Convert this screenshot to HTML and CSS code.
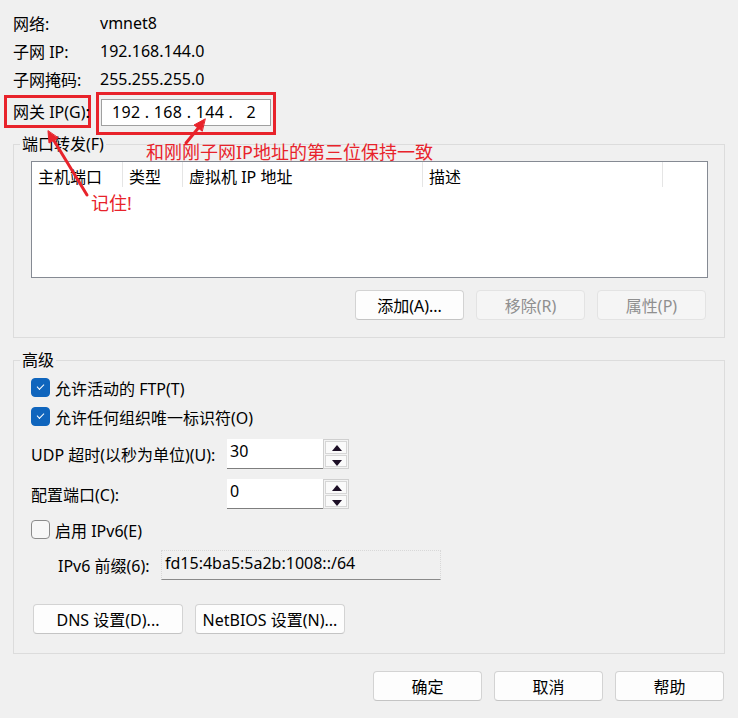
FILE: index.html
```html
<!DOCTYPE html>
<html>
<head>
    <title>NAT 设置</title>
    <link rel="stylesheet" href="styles.css">
</head>
<body>
    <div class="dialog">
        <div class="info">
            <div class="info-row"><span class="info-label">网络:</span><span>vmnet8</span></div>
            <div class="info-row"><span class="info-label">子网 IP:</span><span>192.168.144.0</span></div>
            <div class="info-row"><span class="info-label">子网掩码:</span><span>255.255.255.0</span></div>
            <div class="info-row gateway">
                <span class="info-label mark-box">网关 IP(G):</span>
                <div class="mark-box ip-wrap">
                    <div class="ip-input">192 . 168 . 144 .&nbsp;&nbsp; 2</div>
                </div>
            </div>
        </div>

        <fieldset class="group port-group">
            <legend>端口转发(F)</legend>
            <div class="list">
                <div class="list-head">
                    <span class="col c1">主机端口</span>
                    <span class="col c2">类型</span>
                    <span class="col c3">虚拟机 IP 地址</span>
                    <span class="col c4">描述</span>
                </div>
            </div>
            <div class="btn-row">
                <button class="btn">添加(A)...</button>
                <button class="btn" disabled>移除(R)</button>
                <button class="btn" disabled>属性(P)</button>
            </div>
        </fieldset>

        <fieldset class="group adv-group">
            <legend>高级</legend>
            <label class="check-row first"><span class="cb checked"></span>允许活动的 FTP(T)</label>
            <label class="check-row"><span class="cb checked"></span>允许任何组织唯一标识符(O)</label>
            <div class="field-row udp">
                <span class="field-label">UDP 超时(以秒为单位)(U):</span>
                <div class="spin">
                    <div class="spin-input">30</div>
                    <div class="spin-btns"><span class="up"></span><span class="down"></span></div>
                </div>
            </div>
            <div class="field-row port">
                <span class="field-label">配置端口(C):</span>
                <div class="spin">
                    <div class="spin-input">0</div>
                    <div class="spin-btns"><span class="up"></span><span class="down"></span></div>
                </div>
            </div>
            <label class="check-row ipv6"><span class="cb"></span>启用 IPv6(E)</label>
            <div class="prefix-row">
                <span class="prefix-label">IPv6 前缀(6):</span>
                <div class="prefix-input">fd15:4ba5:5a2b:1008::/64</div>
            </div>
            <div class="btn-row left">
                <button class="btn wide">DNS 设置(D)...</button>
                <button class="btn wide">NetBIOS 设置(N)...</button>
            </div>
        </fieldset>

        <div class="btn-row footer">
            <button class="btn">确定</button>
            <button class="btn">取消</button>
            <button class="btn">帮助</button>
        </div>
    </div>

    <!-- annotations drawn over the screenshot -->
    <div class="note note-ip">和刚刚子网IP地址的第三位保持一致</div>
    <div class="note note-remember">记住!</div>
    <svg class="arrows" width="738" height="718" viewBox="0 0 738 718">
        <g stroke="#e8232b" stroke-width="3" fill="#e8232b" stroke-linecap="round">
            <line x1="186" y1="143" x2="200" y2="126"/>
            <polygon points="205,119 194,125 202,131" stroke-width="1"/>
            <line x1="87" y1="195" x2="53" y2="139"/>
            <polygon points="48,131 49,143 58,138" stroke-width="1"/>
        </g>
    </svg>
</body>
</html>
```

FILE: styles.css
```css
body {
    margin: 0;
    background: #f0f0f0;
    font-family: "Noto Sans", "Noto Sans CJK SC", sans-serif;
    font-size: 16px;
    color: #000;
    width: 738px;
    height: 718px;
    overflow: hidden;
}
.dialog {
    padding: 9px 13px 0 13px;
}
.info-row {
    display: flex;
    align-items: center;
    height: 28px;
}
.info-label {
    width: 87px;
}
.info-row.gateway {
    height: 34px;
    margin-top: 1px;
}
.mark-box {
    box-sizing: border-box;
    border: 3px solid #e8232b;
}
.info-row.gateway .info-label {
    width: 87px;
    height: 33px;
    margin-left: -9px;
    padding-left: 6px;
    display: flex;
    align-items: center;
    white-space: nowrap;
}
.ip-wrap {
    margin-left: 5px;
    width: 180px;
    height: 43px;
    padding: 4px 2px;
    margin-top: 5px;
}
.ip-input {
    box-sizing: border-box;
    height: 27px;
    background: #fff;
    border: 1px solid #a0a0a0;
    padding-left: 10px;
    line-height: 25px;
    font-size: 16px;
    letter-spacing: 0.3px;
}
.group {
    border: 1px solid #dcdcdc;
    margin: 0;
    padding: 0 16px 0 17px;
}
.group legend {
    margin-left: -11px;
    padding: 0 2px;
    line-height: 20px;
}
.port-group {
    margin-top: 6px;
    padding-bottom: 17px;
}
.list {
    margin-top: 7px;
    height: 117px;
    box-sizing: border-box;
    background: #fff;
    border: 1px solid #858a93;
}
.list-head {
    display: flex;
    height: 27px;
}
.col {
    box-sizing: border-box;
    padding-left: 6px;
    line-height: 30px;
    border-right: 1px solid #e5e5e5;
    height: 25px;
}
.c1 { width: 91px; }
.c2 { width: 60px; }
.c3 { width: 240px; }
.c4 { width: 240px; }
.btn-row {
    display: flex;
    justify-content: flex-end;
    gap: 12px;
    margin-top: 12px;
    margin-right: 2px;
}
.btn {
    box-sizing: border-box;
    width: 109px;
    height: 30px;
    background: #fdfdfd;
    border: 1px solid #d3d3d3;
    border-bottom-color: #c4c4c4;
    border-radius: 4px;
    font-family: inherit;
    font-size: 16px;
    color: #000;
    padding: 0;
}
.btn:disabled {
    background: #f5f5f5;
    border-color: #e3e3e3;
    color: #8f8f8f;
}
.adv-group {
    margin-top: 12px;
    padding-bottom: 19px;
}
.check-row {
    display: flex;
    align-items: center;
    height: 29px;
}
.check-row.first {
    margin-top: 3px;
}
.cb {
    box-sizing: border-box;
    width: 19px;
    height: 19px;
    border-radius: 4px;
    margin-right: 5px;
    border: 1px solid #8b8b8b;
    background: #f7f7f7;
    position: relative;
}
.cb.checked {
    background: #0f65bd;
    border-color: #0f65bd;
}
.cb.checked::after {
    content: "";
    position: absolute;
    left: 5px;
    top: 5px;
    width: 6px;
    height: 3px;
    border-left: 1.5px solid #fff;
    border-bottom: 1.5px solid #fff;
    transform: rotate(-45deg);
}
.field-row {
    display: flex;
    align-items: center;
}
.field-row.udp {
    margin-top: 8px;
}
.field-row.port {
    margin-top: 10px;
}
.field-label {
    width: 196px;
    white-space: nowrap;
}
.spin {
    display: flex;
    height: 30px;
}
.spin-input {
    box-sizing: border-box;
    width: 96px;
    height: 30px;
    background: #fff;
    border-bottom: 1px solid #7e7e7e;
    padding: 0 3px;
    line-height: 24px;
    font-size: 16px;
}
.spin-btns {
    box-sizing: border-box;
    width: 26px;
    border: 1px solid #cfcfcf;
    background: #f3f3f3;
    display: flex;
    flex-direction: column;
    gap: 1px;
    padding: 1px;
}
.spin-btns span {
    flex: 1;
    border: 1px solid #d6d6d6;
    background: #fafafa;
    position: relative;
}
.spin-btns span::after {
    content: "";
    position: absolute;
    left: 6px;
    top: 3px;
    border-left: 5px solid transparent;
    border-right: 5px solid transparent;
}
.spin-btns .up::after {
    border-bottom: 6px solid #1c0f25;
}
.spin-btns .down::after {
    border-top: 6px solid #1c0f25;
    top: 4px;
}
.check-row.ipv6 {
    margin-top: 6px;
}
.prefix-row {
    display: flex;
    align-items: center;
    margin-top: 6px;
    padding-left: 27px;
}
.prefix-label {
    width: 103px;
    white-space: nowrap;
}
.prefix-input {
    box-sizing: border-box;
    width: 280px;
    height: 30px;
    border: 1px dotted #d8d8d8;
    border-bottom: 1px solid #8a8a8a;
    padding: 0 3px;
    line-height: 24px;
    font-size: 16px;
}
.btn-row.left {
    justify-content: flex-start;
    margin-top: 24px;
    margin-left: 2px;
}
.btn.wide {
    width: 150px;
}
.footer {
    margin-top: 17px;
    margin-right: 1px;
}
.note {
    position: absolute;
    color: #e8232b;
    font-size: 18px;
    white-space: nowrap;
}
.note-ip {
    left: 146px;
    top: 138px;
}
.note-remember {
    left: 91px;
    top: 189px;
}
.arrows {
    position: absolute;
    left: 0;
    top: 0;
}
```
